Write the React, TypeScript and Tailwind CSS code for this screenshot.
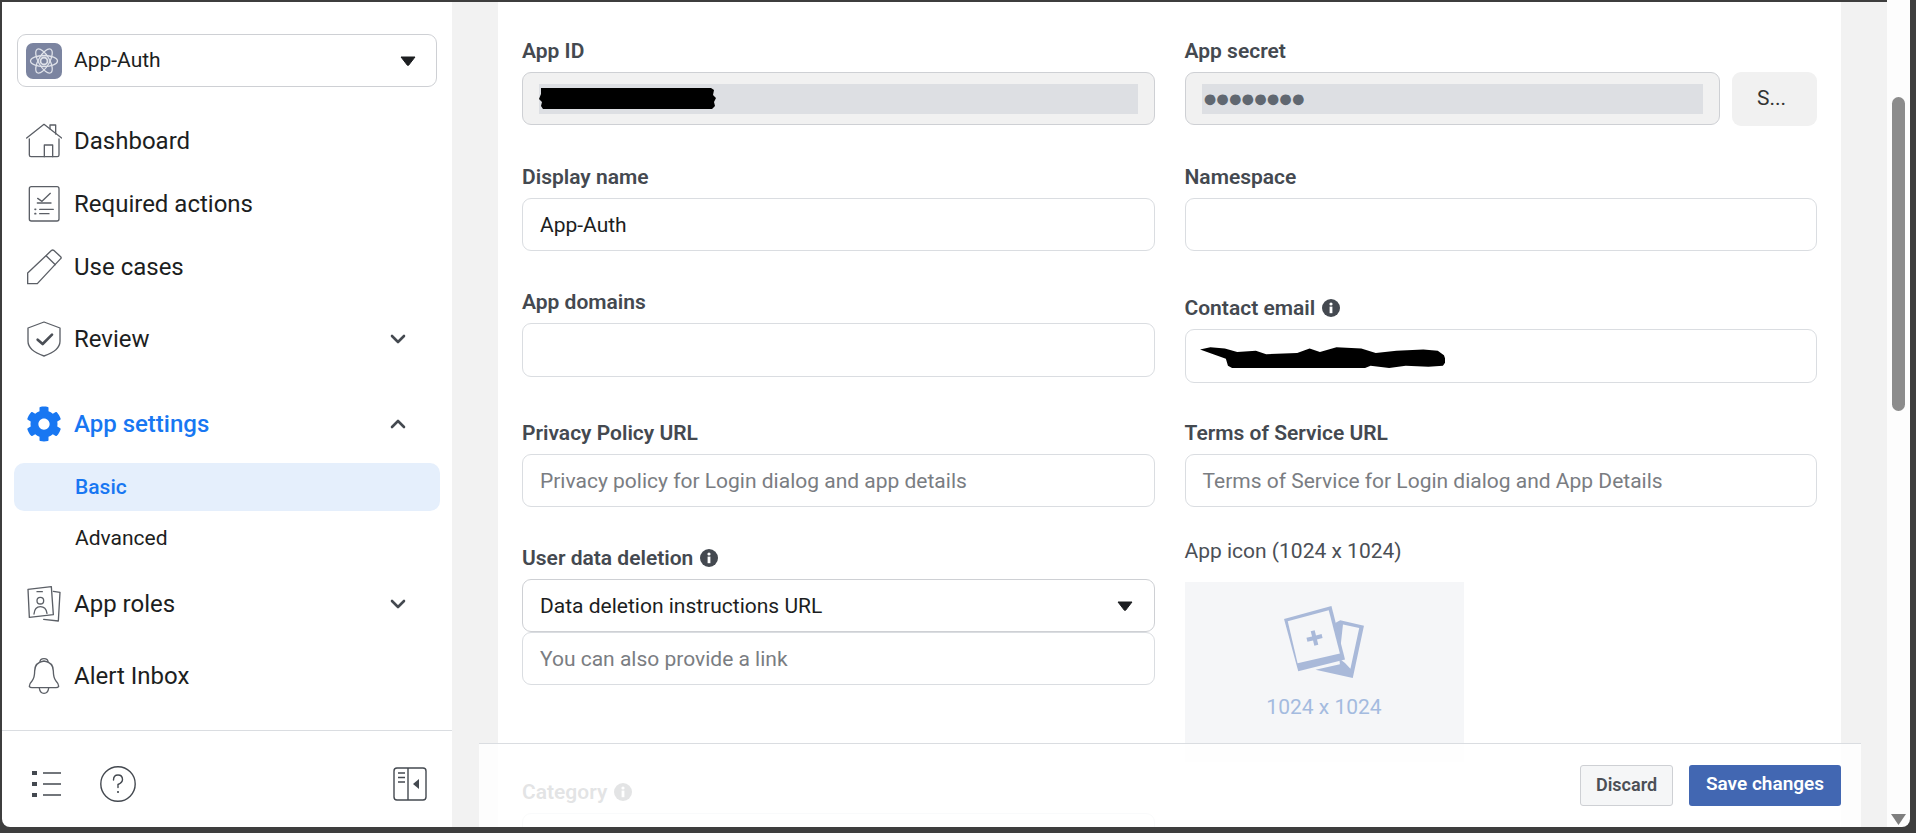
import React from 'react';
import { FaCog } from 'react-icons/fa';

const stroke = '#5b5f66';

const Caret = () => (
  <svg width="16" height="10" viewBox="0 0 16 10">
    <path d="M1 1h14l-6.2 8a1 1 0 0 1-1.6 0z" fill="#1c1e21" stroke="#1c1e21" strokeLinejoin="round" />
  </svg>
);

const Chevron = ({ up }: { up?: boolean }) => (
  <svg width="16" height="10" viewBox="0 0 16 10" fill="none" stroke="#444950" strokeWidth="2.6" strokeLinecap="round" strokeLinejoin="round">
    <path d={up ? 'M2 8l6-6 6 6' : 'M2 2l6 6 6-6'} />
  </svg>
);

const Info = ({ faded }: { faded?: boolean }) => (
  <svg width="18" height="18" viewBox="0 0 18 18" className="shrink-0">
    <circle cx="9" cy="9" r="9" fill={faded ? '#d9d9d9' : '#444950'} />
    <rect x="7.6" y="7.6" width="2.8" height="6.6" fill={faded ? '#fafafa' : '#fff'} />
    <circle cx="9" cy="5" r="1.6" fill={faded ? '#fafafa' : '#fff'} />
  </svg>
);

const HomeIcon = () => (
  <svg width="36" height="36" viewBox="78 366 108 108" fill="none" stroke={stroke} strokeWidth="4" strokeLinejoin="round" strokeLinecap="round">
    <path d="M80 411l52-41 53 41" />
    <path d="M150 384v-12h17v27" />
    <path d="M88 414v48q0 5 5 5h79q5 0 5-5v-48" />
    <path d="M133 467v-35h25v35" />
  </svg>
);

const ChecklistIcon = () => (
  <svg width="36" height="36" viewBox="78 558 108 108" fill="none" stroke={stroke} strokeWidth="4" strokeLinejoin="round" strokeLinecap="round">
    <rect x="88" y="560" width="89" height="103" rx="6" />
    <path d="M113 595l13 9 25-24" />
    <path d="M112 609h41" />
    <path d="M119 628h41M119 641h28" />
    <path d="M105 628h2M105 641h2" strokeWidth="5" />
  </svg>
);

const PencilIcon = () => (
  <svg width="36" height="36" viewBox="78 745 108 108" fill="none" stroke={stroke} strokeWidth="4" strokeLinejoin="round" strokeLinecap="round">
    <path d="M83 849v-32l72-68q3-2 6 0l21 19q3 3 0 6l-70 75z" />
    <path d="M139 766l27 26" />
  </svg>
);

const ShieldIcon = () => (
  <svg width="36" height="36" viewBox="18 32 108 108" fill="none" stroke={stroke} strokeLinejoin="round" strokeLinecap="round">
    <path d="M72 35l48 18v40q0 28-48 44-48-16-48-44V53z" strokeWidth="4" />
    <path d="M53 88l15 13 28-28" strokeWidth="8" stroke="#4b4f56" />
  </svg>
);

const RolesIcon = () => (
  <svg width="36" height="36" viewBox="78 588 108 108" fill="none" stroke={stroke} strokeWidth="4" strokeLinejoin="round" strokeLinecap="round">
    <path d="M84 598l70-8 6 84-72 8z" />
    <path d="M160 604l20 3-5 86-44-5" />
    <circle cx="121" cy="632" r="10" />
    <path d="M102 672q2-22 19-22t20 20" />
    <path d="M111 605h16" />
  </svg>
);

const BellIcon = () => (
  <svg width="36" height="36" viewBox="78 803 108 108" fill="none" stroke={stroke} strokeWidth="4" strokeLinejoin="round" strokeLinecap="round">
    <path d="M88 888q0-8 8-16 8-10 8-30 0-26 28-30 28 4 28 30 0 20 8 30 8 8 8 16-2 4-8 4H96q-6 0-8-4z" />
    <path d="M120 815q0-10 12-10t12 10" />
    <path d="M118 893q2 16 14 16t14-16" />
  </svg>
);

const ListIcon = () => (
  <svg width="30" height="26" viewBox="0 0 30 26" fill="none" stroke="#444950" strokeWidth="1.4">
    <path d="M11 2h18M11 13h18M11 24h18" />
    <rect x="0" y="0" width="5" height="4" fill="#444950" stroke="none" />
    <rect x="0" y="11" width="5" height="4" fill="#444950" stroke="none" />
    <rect x="0" y="22" width="5" height="4" fill="#444950" stroke="none" />
  </svg>
);

const HelpIcon = () => (
  <svg width="36" height="36" viewBox="0 0 36 36" fill="none" stroke="#444950" strokeWidth="1.4" strokeLinecap="round">
    <circle cx="18" cy="18" r="17.2" />
    <path d="M13.5 14q0-5 4.5-5t4.5 4.5q0 3-4.500 5v3" />
    <circle cx="18" cy="26" r="1.100" fill="#444950" stroke="none" />
  </svg>
);

const PanelIcon = () => (
  <svg width="34" height="34" viewBox="0 0 34 34" fill="none" stroke="#444950" strokeWidth="1.4">
    <rect x="1" y="1" width="32" height="32" rx="3" />
    <path d="M15 1v32" />
    <path d="M5 6h7M5 10.500h7M5 15h7" />
    <path d="M26 12v10l-6-5z" fill="#444950" stroke="none" />
  </svg>
);

const AtomIcon = () => (
  <div className="w-9 h-9 rounded-[7px] bg-[#7b84a0] flex items-center justify-center shrink-0">
    <svg width="30" height="30" viewBox="0 0 30 30" fill="none" stroke="#dfe2e9" strokeWidth="1.3">
      <ellipse cx="15" cy="15" rx="13.500" ry="5.500" />
      <ellipse cx="15" cy="15" rx="13.500" ry="5.500" transform="rotate(60 15 15)" />
      <ellipse cx="15" cy="15" rx="13.500" ry="5.500" transform="rotate(120 15 15)" />
      <circle cx="15" cy="15" r="3.500" strokeWidth="1.800" />
    </svg>
  </div>
);

const PhotoIcon = () => (
  <svg width="84" height="76" viewBox="36 14 248 224" className="shrink-0">
    <path d="M208 62l70 16-33 154-110-24 72-16-14-122z" fill="#a9b9d9" />
    <path d="M216 74l48 11-26 120-16-17-17-13z" fill="#f5f6f8" />
    <path d="M42 58l140-38 40 158-138 34z" fill="#a9b9d9" />
    <path d="M53 65l121-33 33 128-125 29z" fill="#f5f6f8" />
    <path d="M126 92h12v16h17v12h-17v16h-12v-16h-17v-12h17z" fill="#a9b9d9" transform="rotate(-14 132 114)" />
  </svg>
);

const IdScribble = () => (
  <svg width="177" height="23" viewBox="0 0 177 23" className="shrink-0">
    <path d="M2 1h170l3 2-1 5 3 3-2 4 1 4-3 3H4l-2-3 1-4-3-3 2-5z" fill="#000" />
  </svg>
);

const EmailScribble = () => (
  <svg width="246" height="23" viewBox="0 0 238 20" preserveAspectRatio="none" className="shrink-0">
    <path d="M1 4l10-2 14 1 12 3 18-1 10 3 30-1 12-4 10 3 16-4 24 1 14 4 20-2 26-1 14 1 6 4 2 5-3 4-14 1-22-1-16 2-18-2-8 3-12 4-10-2-8-3-22 1-16-1-26 2-14-1-16 0-6-3-2-6z" fill="#000" />
  </svg>
);

const NavRow = ({ icon, label, height, chevron, active }: { icon: React.ReactNode; label: string; height: string; chevron?: 'up' | 'down'; active?: boolean }) => (
  <div className={`${height} flex items-center pl-6 pr-[46px] gap-3`}>
    <div className="w-9 h-9 flex items-center justify-center shrink-0">{icon}</div>
    <span className={active ? 'text-[24px] font-medium text-[#1877f2]' : 'text-[24px] text-[#1c1e21]'}>{label}</span>
    {chevron && (
      <div className="ml-auto">
        <Chevron up={chevron === 'up'} />
      </div>
    )}
  </div>
);

const Label = ({ children, info }: { children: React.ReactNode; info?: boolean }) => (
  <div className="h-[26px] mb-2 flex items-center gap-[7px] text-[21px] font-semibold text-[#444950] leading-6">
    <span>{children}</span>
    {info && <Info />}
  </div>
);

const TextBox = ({ value, placeholder, className }: { value?: string; placeholder?: string; className?: string }) => (
  <div className={`h-[53px] pt-[2px] rounded-[9px] border border-[#dadde1] bg-white px-[17px] flex items-center text-[21px] ${value ? 'text-[#1c1e21]' : 'text-[#7a7d82]'} ${className ?? ''}`}>
    {value ?? placeholder}
  </div>
);

export default function App() {
  return (
    <div className="w-[1916px] h-[833px] bg-[#3e3e3e] pt-[2px] pl-[2px] pr-[6px] pb-[6px] overflow-hidden font-['Roboto',sans-serif]">
      <div className="h-full flex rounded-b-lg">
        <aside className="w-[450px] bg-white flex flex-col shrink-0 rounded-bl-lg overflow-hidden">
          <div className="mt-8 mx-[15px] h-[53px] border border-[#ced0d4] rounded-[9px] flex items-center pl-[8px] pr-5 gap-3 shrink-0">
            <AtomIcon />
            <span className="text-[21px] text-[#1c1e21]">App-Auth</span>
            <div className="ml-auto">
              <Caret />
            </div>
          </div>
          <nav className="mt-[22px] flex flex-col">
            <NavRow icon={<HomeIcon />} label="Dashboard" height="h-16" />
            <NavRow icon={<ChecklistIcon />} label="Required actions" height="h-[62px]" />
            <NavRow icon={<PencilIcon />} label="Use cases" height="h-[63px]" />
            <NavRow icon={<ShieldIcon />} label="Review" height="h-[82px]" chevron="down" />
            <div className="h-[5px]" />
            <NavRow icon={<FaCog size={36} color="#1877f2" />} label="App settings" height="h-[78px]" chevron="up" active />
            <div className="mx-3 h-12 pt-[2px] rounded-[10px] bg-[#e5effc] flex items-center pl-[61px] text-[21px] font-medium text-[#1877f2]">Basic</div>
            <div className="mt-[3px] h-12 pt-[2px] flex items-center pl-[73px] text-[21px] text-[#1c1e21]">Advanced</div>
            <NavRow icon={<RolesIcon />} label="App roles" height="h-[84px]" chevron="down" />
            <NavRow icon={<BellIcon />} label="Alert Inbox" height="h-[60px]" />
          </nav>
          <div className="mt-6 flex-1 border-t border-[#dadde1] flex items-center pl-[30px] pr-[25px] pt-[10px]">
            <ListIcon />
            <div className="ml-[38px]">
              <HelpIcon />
            </div>
            <div className="ml-auto">
              <PanelIcon />
            </div>
          </div>
        </aside>

        <main className="relative flex-1 bg-[#f2f2f2] px-[46px] overflow-hidden">
          <div className="h-full bg-white px-6 pt-9 grid grid-cols-2 gap-x-[30px] items-start">
            <div className="flex flex-col">
              <div>
                <Label>App ID</Label>
                <div className="h-[53px] rounded-[9px] border border-[#ced0d4] bg-[#f1f1f1] px-[16px] flex items-center">
                  <div className="w-full h-[30px] bg-[#dddfe3] flex items-center">
                    <IdScribble />
                  </div>
                </div>
              </div>
              <div className="mt-[39px]">
                <Label>Display name</Label>
                <TextBox value="App-Auth" />
              </div>
              <div className="mt-[38px]">
                <Label>App domains</Label>
                <TextBox className="h-[54px]" />
              </div>
              <div className="mt-[43px]">
                <Label>Privacy Policy URL</Label>
                <TextBox placeholder="Privacy policy for Login dialog and app details" />
              </div>
              <div className="mt-[38px]">
                <Label info>User data deletion</Label>
                <div className="h-[53px] rounded-[9px] border border-[#ced0d4] bg-white pl-[17px] pr-[21px] flex items-center justify-between text-[21px] text-[#1c1e21]">
                  <span className="pt-[2px]">Data deletion instructions URL</span>
                  <Caret />
                </div>
                <TextBox placeholder="You can also provide a link" />
              </div>
              <div className="mt-[94px]">
                <Label info>Category</Label>
                <TextBox />
              </div>
            </div>

            <div className="flex flex-col">
              <div>
                <Label>App secret</Label>
                <div className="flex gap-3">
                  <div className="flex-1 h-[53px] rounded-[9px] border border-[#ced0d4] bg-[#f1f1f1] px-[16px] flex items-center">
                    <div className="w-full h-[30px] bg-[#dddfe3] flex items-center pl-[1px] text-[25px] tracking-[-2.5px] text-[#606770]">
                      ●●●●●●●●
                    </div>
                  </div>
                  <div className="w-[85px] h-[54px] rounded-[9px] bg-[#f1f1f1] flex items-center pl-[25px] text-[21px] text-[#333]">S...</div>
                </div>
              </div>
              <div className="mt-[38px]">
                <Label>Namespace</Label>
                <TextBox />
              </div>
              <div className="mt-[44px]">
                <Label info>Contact email</Label>
                <div className="h-[54px] rounded-[9px] border border-[#dadde1] bg-white px-[13px] flex items-center">
                  <EmailScribble />
                </div>
              </div>
              <div className="mt-[37px]">
                <Label>Terms of Service URL</Label>
                <TextBox placeholder="Terms of Service for Login dialog and App Details" />
              </div>
              <div className="mt-8 text-[21px] leading-6 text-[#4b4f56]">App icon (1024 x 1024)</div>
              <div className="mt-[19px] w-[279px] h-[180px] bg-[#f5f6f8] flex flex-col items-center pt-[22px]">
                <PhotoIcon />
                <div className="mt-3 text-[21px] text-[#a4bbdf]">1024 x 1024</div>
              </div>
            </div>
          </div>

          <div className="absolute bottom-0 left-[27px] right-[26px] h-[84px] bg-white/85 border-t border-[#dadde1] flex items-start justify-end gap-4 pt-[21px] pr-5">
            <button className="w-[93px] h-[41px] pb-[2px] rounded-[3px] border border-[#ced0d4] bg-[#f5f6f7] text-[18px] font-semibold text-[#4b4f56]">Discard</button>
            <button className="w-[152px] h-[41px] pb-[2px] rounded-[3px] bg-[#4267b2] text-[19px] font-semibold text-white">Save changes</button>
          </div>
        </main>

        <div className="w-[23px] -mt-[2px] bg-[#fdfdfd] flex flex-col items-center shrink-0 rounded-br-lg">
          <div className="mt-[97px] w-[13px] h-[314px] rounded-full bg-[#8c8c8c]" />
          <svg width="15" height="11" viewBox="0 0 15 11" className="mt-auto mb-[2px]">
            <path d="M0 0h15l-7.500 11z" fill="#7f7f7f" />
          </svg>
        </div>
      </div>
    </div>
  );
}
